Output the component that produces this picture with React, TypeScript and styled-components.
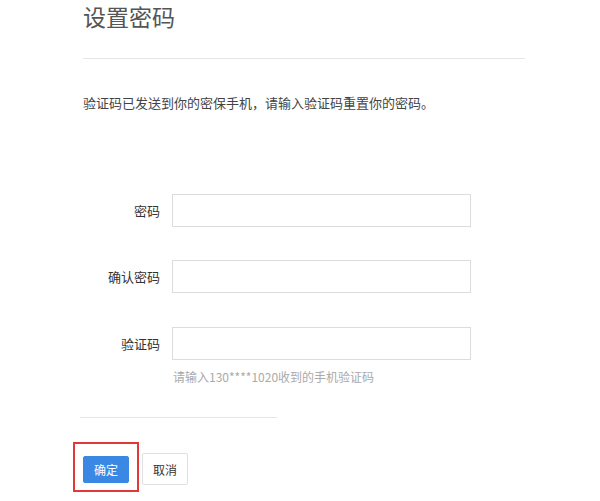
import React from "react";
import styled, { createGlobalStyle } from "styled-components";

const Global = createGlobalStyle`
  html, body { margin: 0; padding: 0; background: #fff; }
  body { font-family: "Noto Sans CJK SC", "Noto Sans", sans-serif; color: #333; }
`;

const Page = styled.div`
  width: 600px;
  height: 501px;
  box-sizing: border-box;
  padding: 0 0 0 83px;
  overflow: hidden;
`;

const Title = styled.h1`
  margin: 0;
  padding-top: 2px;
  font-size: 23px;
  line-height: 28px;
  font-weight: 400;
  color: #555;
`;

const Divider = styled.div<{ $w: number; $shift?: number }>`
  width: ${(p) => p.$w}px;
  height: 1px;
  background: #e6e6e6;
  margin-left: ${(p) => p.$shift ?? 0}px;
`;

const Desc = styled.p`
  margin: 35px 0 0;
  font-size: 13px;
  line-height: 18px;
  color: #444;
`;

const Form = styled.div`
  margin-top: 82px;
  display: flex;
  flex-direction: column;
`;

const Row = styled.div<{ $gap: number }>`
  display: flex;
  align-items: center;
  margin-top: ${(p) => p.$gap}px;
  margin-left: -83px;
`;

const Label = styled.label`
  width: 160px;
  text-align: right;
  font-size: 13px;
  color: #333;
`;

const Input = styled.div`
  margin-left: 12px;
  width: 299px;
  height: 33px;
  box-sizing: border-box;
  border: 1px solid #dcdcdc;
  background: #fff;
`;

const Hint = styled.div`
  margin: 9px 0 0 90px;
  font-size: 12px;
  line-height: 16px;
  color: #aaa;
`;

const Bottom = styled.div`
  margin-top: 32px;
`;

const Buttons = styled.div`
  margin-top: 35px;
  display: flex;
  align-items: center;
  gap: 13px;
`;

const Annotated = styled.div`
  position: relative;
  display: flex;
`;

const RedBox = styled.span`
  position: absolute;
  left: -10px;
  top: -14px;
  width: 66px;
  height: 50px;
  box-sizing: border-box;
  border: 2px solid #e3383a;
  pointer-events: none;
`;

const Btn = styled.button<{ $primary?: boolean }>`
  font-family: inherit;
  font-size: 12px;
  width: 46px;
  height: ${(p) => (p.$primary ? 27 : 32)}px;
  padding: 0;
  border-radius: 2px;
  border: 1px solid ${(p) => (p.$primary ? "#3a88e4" : "#e0e0e0")};
  background: ${(p) => (p.$primary ? "#3a88e4" : "#fff")};
  color: ${(p) => (p.$primary ? "#fff" : "#333")};
`;

export default function App() {
  return (
    <>
      <Global />
      <Page>
        <Title>设置密码</Title>
        <Divider $w={442} style={{ marginTop: 28 }} />
        <Desc>验证码已发送到你的密保手机，请输入验证码重置你的密码。</Desc>
        <Form>
          <Row $gap={0}>
            <Label>密码</Label>
            <Input />
          </Row>
          <Row $gap={33}>
            <Label>确认密码</Label>
            <Input />
          </Row>
          <Row $gap={34}>
            <Label>验证码</Label>
            <Input />
          </Row>
          <Hint>请输入130****1020收到的手机验证码</Hint>
        </Form>
        <Bottom>
          <Divider $w={197} $shift={-3} />
        </Bottom>
        <Buttons>
          <Annotated>
            <Btn $primary>确定</Btn>
            <RedBox />
          </Annotated>
          <Btn>取消</Btn>
        </Buttons>
      </Page>
    </>
  );
}
